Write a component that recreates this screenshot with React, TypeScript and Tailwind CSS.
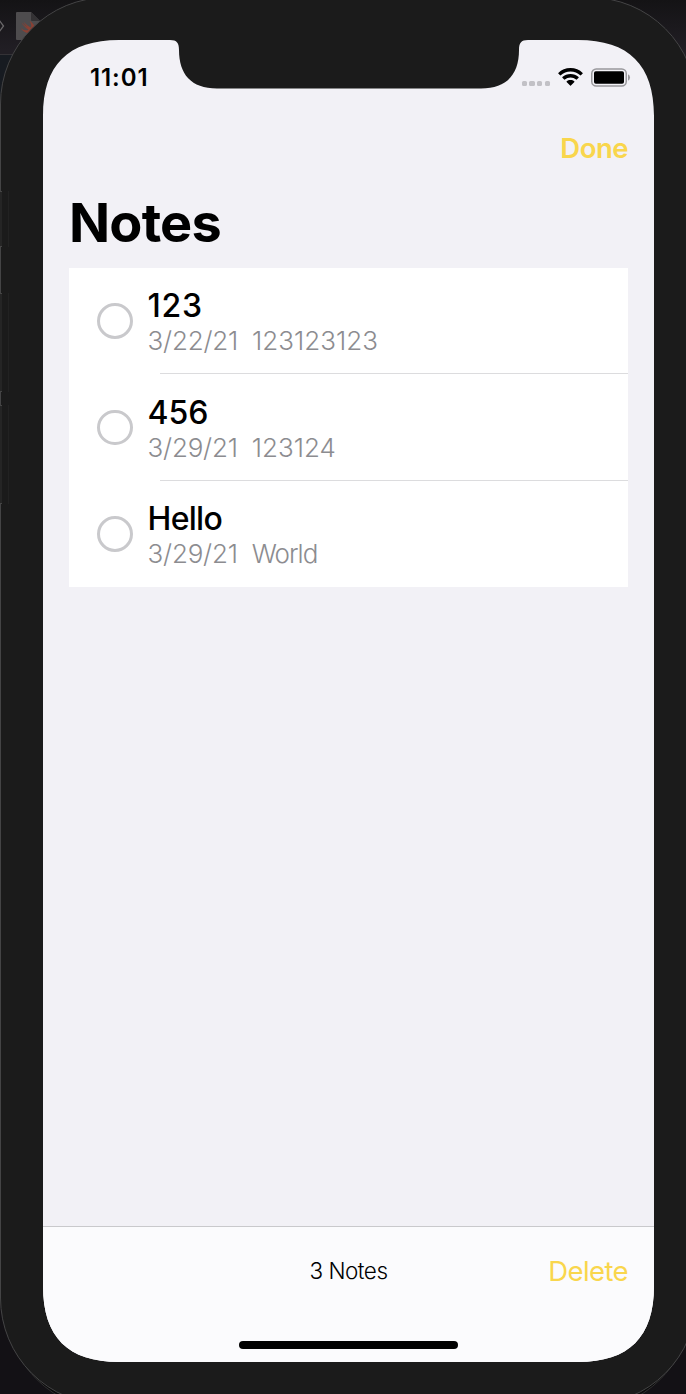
import React from "react";

const notes = [
  { title: "123", date: "3/22/21", body: "123123123", titleSpacing: "tracking-[0.7px]", bodySpacing: "tracking-[0px]" },
  { title: "456", date: "3/29/21", body: "123124", titleSpacing: "tracking-[0px]", bodySpacing: "tracking-[0px]" },
  { title: "Hello", date: "3/29/21", body: "World", titleSpacing: "tracking-[-0.7px]", bodySpacing: "tracking-[-1px]" },
];

function SwiftFile() {
  return (
    <svg className="absolute left-0 top-0 h-20 w-12" viewBox="0 0 48 80" fill="none">
      <path d="M-2 18.5 L3.5 26 L-2 33.5" stroke="#6b696b" strokeWidth="1.3" />
      <path d="M17 12H31L40 21V40H17Q16 40 16 39V13Q16 12 17 12Z" fill="#4e4c4e" />
      <path d="M31 12V20Q31 21 32 21H40Z" fill="#343234" />
      <path
        d="M20.500 28C23.500 30.500 26.500 30.800 28.600 29.800C25.500 27.800 23 25 21.500 22.500C23.800 24.500 25.500 26 27.300 27.200C25.800 25.500 24.300 23.500 23.300 21.800C26 24.300 28.500 26.500 31 27.800C31.600 25.500 31 23 29.500 20.800C33.500 23.300 35.300 26.800 34.500 29.600C35.600 31 35.700 32.300 35.200 33.400C34.300 31.800 33.200 31.600 32 32.300C28.300 34 23.500 32.500 20.500 28Z"
        fill="#8a4033"
      />
    </svg>
  );
}

function StatusBar() {
  return (
    <header className="flex h-[76px] shrink-0 items-center justify-between pl-[47px] pr-[23px]">
      <span className="text-[24px] font-semibold leading-7 tracking-[0.9px]">11:01</span>
      <div className="flex items-center">
        <div className="mr-2 mt-[11px] flex gap-[2.4px]">
          <i className="size-[5.3px] rounded-[1.5px] bg-[#c2c1c6]" />
          <i className="size-[5.3px] rounded-[1.5px] bg-[#c2c1c6]" />
          <i className="size-[5.3px] rounded-[1.5px] bg-[#c2c1c6]" />
          <i className="size-[5.3px] rounded-[1.5px] bg-[#c2c1c6]" />
        </div>
        <svg className="mb-[2px] mr-2 h-[18px] w-[25px]" viewBox="0 0 25 18">
          <path d="M12.5 0C17.3 0 21.600 1.900 24.700 4.900Q25 5.200 24.700 5.500L22.900 7.300Q22.600 7.600 22.200 7.300C19.700 5 16.300 3.600 12.500 3.600S5.300 5 2.800 7.300Q2.400 7.600 2.100 7.300L.3 5.500Q0 5.200.3 4.900C3.400 1.900 7.700 0 12.500 0Z" />
          <path d="M12.500 6C15.600 6 18.500 7.200 20.600 9.100Q20.900 9.400 20.600 9.700L18.800 11.500Q18.500 11.800 18.100 11.500C16.600 10.200 14.700 9.500 12.500 9.500S8.400 10.200 6.900 11.500Q6.500 11.800 6.200 11.500L4.400 9.700Q4.100 9.400 4.400 9.100C6.500 7.200 9.400 6 12.500 6Z" />
          <path d="M12.500 12C14 12 15.400 12.500 16.400 13.400Q16.800 13.700 16.400 14.100L12.900 17.600Q12.500 18 12.100 17.600L8.600 14.100Q8.200 13.700 8.600 13.400C9.600 12.500 11 12 12.500 12Z" />
        </svg>
        <svg className="mb-[2px] h-[19px] w-10" viewBox="0 0 40 19">
          <rect x=".75" y="1" width="34.500" height="17" rx="4.500" fill="none" stroke="#99989c" strokeWidth="1.500" />
          <rect x="3" y="3.200" width="30" height="12.600" rx="1.800" />
          <path d="M37 6.300Q39 7.200 39 9.500T37 12.700Z" fill="#99989c" />
        </svg>
      </div>
    </header>
  );
}

export default function App() {
  return (
    <div className="relative h-[1394px] w-[686px] overflow-hidden bg-[#131115] font-['Inter',sans-serif] text-black">
      <div className="absolute left-0 top-0 h-[200px] w-full bg-linear-to-b from-[#141315] to-[#211e24] to-25%" />
      <div className="absolute left-0 top-[54px] h-16 w-8 border-t border-[#343236] bg-[#171b21]" />
      <SwiftFile />
      <div className="absolute -top-[3px] left-[3px] h-[1415px] w-[691px] rounded-[112px] border border-[#303030] bg-[#0c0c0c]" />
      <div className="absolute -top-[3px] left-0 h-[1408px] w-[697px] rounded-[107px] border border-[#444445] bg-[#1b1b1b] pl-[42px] pt-[42px]">
        <main className="flex h-[1322px] w-[611px] flex-col bg-[#f2f1f6] [clip-path:path('M76,0_H127_C134,0_136,3_136,10_C136,34_148,48.500_174,48.500_H438_C464,48.500_476,34_476,10_C476,3_478,0_485,0_H535_C586,0_611,25_611,76_V1246_C611,1297_586,1322_535,1322_H76_C25,1322_0,1297_0,1246_V76_C0,25_25,0_76,0_Z')]">
          <StatusBar />
          <nav className="flex h-16 shrink-0 items-center justify-end pr-[26px]">
            <button className="text-[27.500px] font-semibold leading-8 tracking-[-0.5px] text-[#f9d64c]">Done</button>
          </nav>
          <h1 className="h-[87.500px] shrink-0 pl-[26px] pt-[11px] text-[54px] font-bold leading-[64px] tracking-[-0.8px]">Notes</h1>
          <ul className="mx-[26px] bg-white">
            {notes.map((note, i) => (
              <li key={note.title} className="relative flex h-[106.500px] items-center pl-7">
                <span className="size-[35.500px] shrink-0 rounded-full border-[3px] border-[#c9c9cc]" />
                <div className="ml-[15px] mt-[3px]">
                  <h2 className={`text-[32px] font-medium leading-[38px] ${note.titleSpacing}`}>{note.title}</h2>
                  <p className="flex gap-[14px] text-[26px] font-light leading-8 text-[#8c8c90]">
                    <span className="tracking-[-0.2px]">{note.date}</span>
                    <span className={note.bodySpacing}>{note.body}</span>
                  </p>
                </div>
                {i < notes.length - 1 && <div className="absolute bottom-0 left-[91px] right-0 h-px bg-[#dcdcde]" />}
              </li>
            ))}
          </ul>
          <footer className="mt-auto flex h-[136px] flex-col items-center border-t border-[#c9c9cc] bg-[#fbfbfd]">
            <div className="grid h-[88px] w-full shrink-0 grid-cols-3 items-center px-[26px]">
              <span className="col-start-2 text-center text-[22.500px] font-light leading-7 tracking-[-0.5px]">3 Notes</span>
              <button className="justify-self-end text-[27.500px] leading-8 tracking-[-0.6px] text-[#f9d64c]">Delete</button>
            </div>
            <div className="mt-[26px] h-[8px] w-[219px] rounded-full bg-black" />
          </footer>
        </main>
      </div>
      <div className="absolute left-0 top-[191px] h-14 w-[2px] border-y border-[#454545] bg-[#252525]" />
      <div className="absolute left-0 top-[293px] h-[99px] w-[2px] border-y border-[#454545] bg-[#252525]" />
      <div className="absolute left-0 top-[405px] h-[99px] w-[2px] border-y border-[#454545] bg-[#252525]" />
      <div className="absolute left-[8px] top-[191px] h-14 w-px bg-[#222]" />
      <div className="absolute left-[8px] top-[293px] h-[99px] w-px bg-[#222]" />
      <div className="absolute left-[8px] top-[405px] h-[99px] w-px bg-[#222]" />
    </div>
  );
}
